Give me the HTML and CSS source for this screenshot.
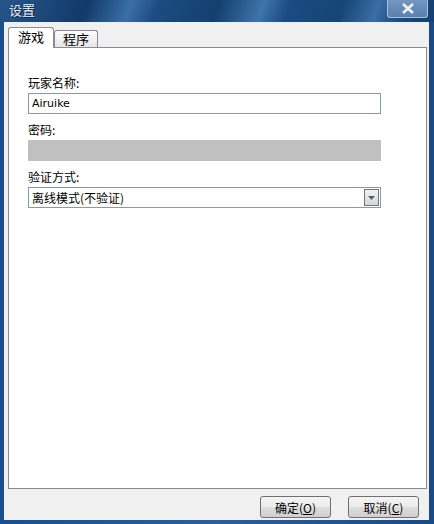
FILE: index.html
```html
<!DOCTYPE html>
<html lang="zh-CN">
<head>
  <meta charset="UTF-8">
  <title>设置</title>
  <link rel="stylesheet" href="styles.css">
</head>
<body>
  <div class="window">
    <div class="titlebar">
      <span class="title">设置</span>
      <button class="close-btn" type="button">
        <svg width="14" height="11" viewBox="0 0 14 11"><path d="M2 1 L12 10 M12 1 L2 10" stroke="#eef2f8" stroke-width="2.6" fill="none"/></svg>
      </button>
    </div>

    <div class="client">
      <div class="tabs">
        <div class="tab active">游戏</div>
        <div class="tab">程序</div>
      </div>

      <div class="panel">
        <!-- 玩家 -->
        <div class="field-group">
          <label for="player">玩家名称:</label>
          <input type="text" id="player" class="text-input" value="Airuike">
        </div>

        <div class="field-group">
          <label>密码:</label>
          <div class="text-input disabled"></div>
        </div>

        <div class="field-group">
          <label>验证方式:</label>
          <div class="select">
            <span class="select-value">离线模式(不验证)</span>
            <span class="select-arrow">
              <svg width="7" height="4" viewBox="0 0 7 4"><path d="M0 0 H7 L3.5 4 Z" fill="#4d6185"/></svg>
            </span>
          </div>
        </div>
      </div>

      <div class="button-row">
        <button type="button" class="dlg-btn">确定(<u>O</u>)</button>
        <button type="button" class="dlg-btn">取消(<u>C</u>)</button>
      </div>
    </div>
  </div>
</body>
</html>
```

FILE: styles.css
```css
body {
  margin: 0;
  padding: 0;
  font-family: "Noto Sans CJK SC", "DejaVu Sans", sans-serif;
  font-size: 12px;
  color: #000;
}

.window {
  width: 434px;
  height: 524px;
  display: flex;
  flex-direction: column;
  background: linear-gradient(90deg, #1a4f8f 0%, #2a5f9c 50%, #1a4a86 100%);
  box-sizing: border-box;
}

.titlebar {
  height: 22px;
  flex: none;
  display: flex;
  align-items: flex-start;
  justify-content: space-between;
  background:
    linear-gradient(110deg,
      #27558a 0%, #1a4678 12%, #123a6a 20%,
      #3a6fa6 30%, #1d4c82 36%, #14406f 50%,
      #3e74ab 60%, #1a4b82 66%, #164475 78%,
      #3a6ea5 86%, #1a4a80 92%, #153f70 100%);
}

.title {
  color: #e8eef8;
  font-size: 13px;
  line-height: 20px;
  padding-left: 9px;
  text-shadow: 1px 1px 0 #0b2546;
}

.close-btn {
  width: 41px;
  height: 18px;
  margin-right: 6px;
  padding: 0;
  border: 1px solid #a9bfdc;
  border-top: none;
  border-radius: 0 0 3px 3px;
  background: linear-gradient(#7395c0, #5a80b0);
  display: flex;
  align-items: center;
  justify-content: center;
}

.client {
  flex: 1;
  margin: 0 5px 4px 4px;
  background-color: #f0f0f0;
  padding: 5px 2px 0 4px;
  display: flex;
  flex-direction: column;
}

.tabs {
  display: flex;
  align-items: flex-end;
  height: 20px;
  position: relative;
  z-index: 1;
}

.tab {
  height: 17px;
  line-height: 16px;
  padding: 0 8px;
  border: 1px solid #898c95;
  border-bottom: none;
  border-radius: 3px 3px 0 0;
  background: linear-gradient(#fdfdfd, #e6e6e6);
  box-sizing: border-box;
  font-size: 13px;
}

.tab.active {
  height: 21px;
  margin-bottom: -1px;
  padding: 1px 9px 0 9px;
  background: #fff;
  border-color: #898c95;
}

.panel {
  height: 442px;
  background-color: #fff;
  border: 1px solid #898c95;
  box-sizing: border-box;
  padding: 27px 45px 0 19px;
  display: flex;
  flex-direction: column;
  gap: 8px;
}

.field-group {
  display: flex;
  flex-direction: column;
  gap: 2px;
}

label {
  display: block;
  line-height: 16px;
  height: 16px;
}

.text-input {
  width: 353px;
  height: 21px;
  border: 1px solid #8a99a8;
  box-sizing: border-box;
  padding: 0 3px;
  font-family: "DejaVu Sans", sans-serif;
  font-size: 11px;
  margin: 0;
  outline: none;
}

.text-input.disabled {
  background-color: #c0c0c0;
  border-color: #c0c0c0;
}

.select {
  width: 353px;
  height: 21px;
  border: 1px solid #8a99a8;
  box-sizing: border-box;
  display: flex;
  align-items: center;
  justify-content: space-between;
  padding-left: 3px;
}

.select-value {
  line-height: 19px;
}

.select-arrow {
  width: 15px;
  height: 17px;
  margin-right: 1px;
  border: 1px solid #6e7480;
  box-sizing: border-box;
  background: linear-gradient(#f2f2f2, #d6d6d6);
  display: flex;
  align-items: center;
  justify-content: center;
}

.button-row {
  display: flex;
  justify-content: flex-end;
  gap: 17px;
  margin-top: 7px;
  padding-right: 8px;
}

.dlg-btn {
  width: 71px;
  height: 22px;
  padding: 0;
  border: 1px solid #707070;
  border-radius: 3px;
  background: linear-gradient(#f4f4f4 0%, #ebebeb 50%, #dddddd 51%, #d0d0d0 100%);
  font-family: "Noto Sans CJK SC", sans-serif;
  font-size: 12px;
  color: #000;
}
```
